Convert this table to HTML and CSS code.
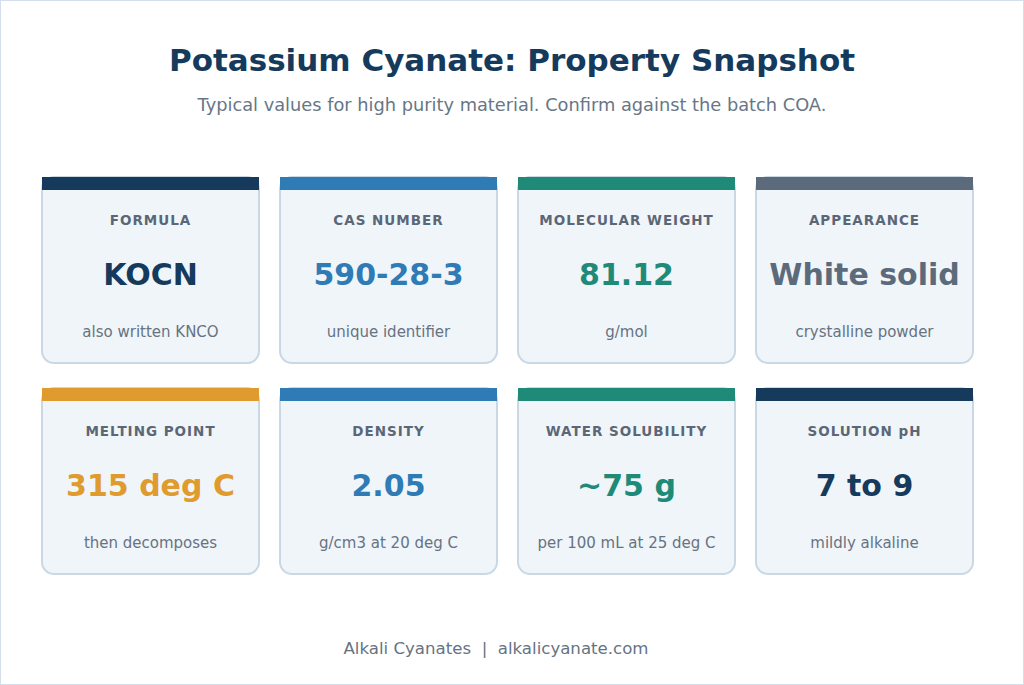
FILE: index.html
```html
<!DOCTYPE html>
<html lang="en">
<head>
<meta charset="utf-8">
<title>Potassium Cyanate: Property Snapshot</title>
<link rel="stylesheet" href="styles.css">
</head>
<body>
<div class="page">
  <h1 class="title">Potassium Cyanate: Property Snapshot</h1>
  <p class="subtitle">Typical values for high purity material. Confirm against the batch COA.</p>
  <div class="grid">
    <div class="card">
      <div class="bar navy-bg"></div>
      <div class="label">FORMULA</div>
      <div class="value navy">KOCN</div>
      <div class="note">also written KNCO</div>
    </div>
    <div class="card">
      <div class="bar blue-bg"></div>
      <div class="label">CAS NUMBER</div>
      <div class="value blue">590-28-3</div>
      <div class="note">unique identifier</div>
    </div>
    <div class="card">
      <div class="bar teal-bg"></div>
      <div class="label">MOLECULAR WEIGHT</div>
      <div class="value teal">81.12</div>
      <div class="note">g/mol</div>
    </div>
    <div class="card">
      <div class="bar slate-bg"></div>
      <div class="label">APPEARANCE</div>
      <div class="value slate">White solid</div>
      <div class="note">crystalline powder</div>
    </div>
    <div class="card">
      <div class="bar amber-bg"></div>
      <div class="label">MELTING POINT</div>
      <div class="value amber">315 deg C</div>
      <div class="note">then decomposes</div>
    </div>
    <div class="card">
      <div class="bar blue-bg"></div>
      <div class="label">DENSITY</div>
      <div class="value blue">2.05</div>
      <div class="note">g/cm3 at 20 deg C</div>
    </div>
    <div class="card">
      <div class="bar teal-bg"></div>
      <div class="label">WATER SOLUBILITY</div>
      <div class="value teal">~75 g</div>
      <div class="note">per 100 mL at 25 deg C</div>
    </div>
    <div class="card">
      <div class="bar navy-bg"></div>
      <div class="label">SOLUTION pH</div>
      <div class="value navy">7 to 9</div>
      <div class="note">mildly alkaline</div>
    </div>
  </div>
  <div class="footer">Alkali Cyanates &nbsp;|&nbsp; alkalicyanate.com</div>
</div>
</body>
</html>
```
FILE: styles.css
```css
html, body {
  margin: 0;
  padding: 0;
  background: #ffffff;
}

.page {
  width: 1024px;
  height: 685px;
  box-sizing: border-box;
  border: 1px solid #d3dfea;
  font-family: "DejaVu Sans", "Liberation Sans", sans-serif;
  overflow: hidden;
}

.title {
  margin: 0;
  padding-top: 41px;
  font-size: 31px;
  line-height: 36px;
  font-weight: bold;
  color: #153a5c;
  text-align: center;
}

.subtitle {
  margin: 16px 0 0;
  font-size: 17.8px;
  line-height: 22px;
  color: #687686;
  text-align: center;
}

.grid {
  margin-top: 60px;
  padding-left: 40px;
  display: grid;
  grid-template-columns: repeat(4, 219px);
  grid-auto-rows: 188px;
  column-gap: 19px;
  row-gap: 23px;
}

.card {
  box-sizing: border-box;
  border: 2px solid #cad8e5;
  border-radius: 13px;
  background: #f0f5fa;
  text-align: center;
  display: flex;
  flex-direction: column;
  align-items: stretch;
}

.bar {
  height: 13px;
  margin: -1px -1px 0;
}

.label {
  margin-top: 21px;
  font-size: 13.5px;
  line-height: 18px;
  font-weight: bold;
  letter-spacing: 1px;
  color: #5b6776;
}

.value {
  margin-top: 28px;
  font-size: 30px;
  line-height: 36px;
  font-weight: bold;
}

.note {
  margin-top: 30px;
  font-size: 15px;
  line-height: 18px;
  color: #667382;
}

.navy { color: #153a5c; }
.blue { color: #2f7bb6; }
.teal { color: #1f8a78; }
.slate { color: #5c6b7b; }
.amber { color: #df9b2e; }

.navy-bg { background: #153a5c; }
.blue-bg { background: #2f7bb6; }
.teal-bg { background: #1f8a78; }
.slate-bg { background: #5c6b7b; }
.amber-bg { background: #df9b2e; }

.footer {
  margin-top: 64px;
  padding-right: 32px;
  font-size: 16.6px;
  line-height: 20px;
  color: #667382;
  text-align: center;
}
```
